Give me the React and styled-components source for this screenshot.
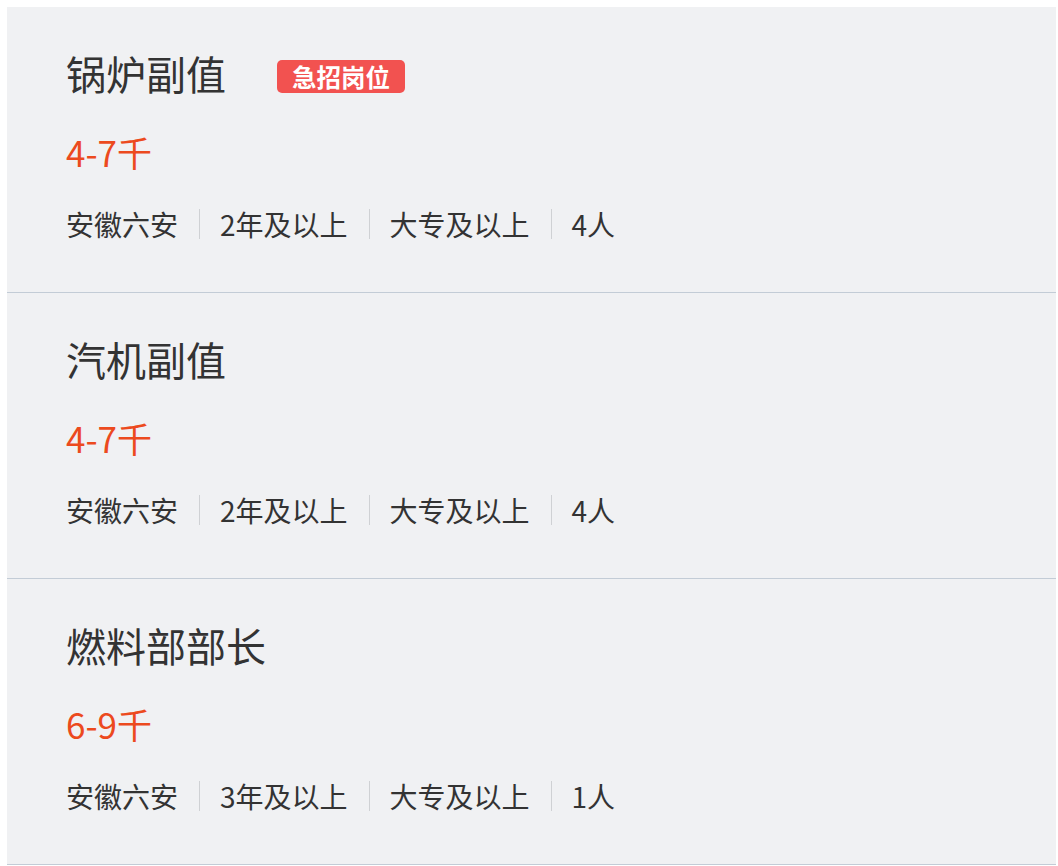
import React from "react";
import styled, { createGlobalStyle } from "styled-components";

const Global = createGlobalStyle`
  html, body {
    margin: 0;
    padding: 0;
    background: #ffffff;
  }
  body {
    font-family: "Noto Sans CJK SC", "Noto Sans", sans-serif;
  }
`;

const Page = styled.div`
  padding: 7px 2px 0 7px;
`;

const List = styled.div`
  background: #f0f1f3;
  display: flex;
  flex-direction: column;
`;

const Item = styled.div`
  border-bottom: 1px solid #c3ccd6;
  padding: 46px 0 0 59px;
  box-sizing: content-box;
  display: flex;
  flex-direction: column;
  height: 239px;
`;

const TitleRow = styled.div`
  display: flex;
  align-items: center;
  height: 40px;
`;

const Title = styled.h2`
  margin: 0;
  font-size: 40px;
  line-height: 40px;
  font-weight: 400;
  color: #333333;
`;

const Badge = styled.span`
  margin: 6px 0 0 51px;
  height: 33px;
  padding: 0 15px;
  border-radius: 5px;
  background: #f25250;
  color: #ffffff;
  font-size: 24.5px;
  font-weight: 700;
  line-height: 33px;
  display: inline-flex;
  align-items: center;
`;

const Salary = styled.div`
  margin-top: 39px;
  font-size: 35px;
  line-height: 40px;
  color: #ec4a1e;
`;

const Meta = styled.div`
  margin-top: 36px;
  display: flex;
  align-items: center;
  height: 32px;
  font-size: 28px;
  color: #333333;
`;

const Sep = styled.span`
  width: 1px;
  height: 30px;
  background: #cfd1d4;
  margin: 0 20px 0 21px;
`;

const jobs = [
  { title: "锅炉副值", urgent: true, salary: "4-7千", meta: ["安徽六安", "2年及以上", "大专及以上", "4人"] },
  { title: "汽机副值", salary: "4-7千", meta: ["安徽六安", "2年及以上", "大专及以上", "4人"] },
  { title: "燃料部部长", salary: "6-9千", meta: ["安徽六安", "3年及以上", "大专及以上", "1人"] },
];

const App = () => {
  return (
    <Page>
      <Global />
      <List>
        {jobs.map((job) => (
          <Item key={job.title}>
            <TitleRow>
              <Title>{job.title}</Title>
              {job.urgent && <Badge>急招岗位</Badge>}
            </TitleRow>
            <Salary>{job.salary}</Salary>
            <Meta>
              {job.meta.map((m, i) => (
                <React.Fragment key={m + i}>
                  {i > 0 && <Sep />}
                  <span>{m}</span>
                </React.Fragment>
              ))}
            </Meta>
          </Item>
        ))}
      </List>
    </Page>
  );
};

export default App;
